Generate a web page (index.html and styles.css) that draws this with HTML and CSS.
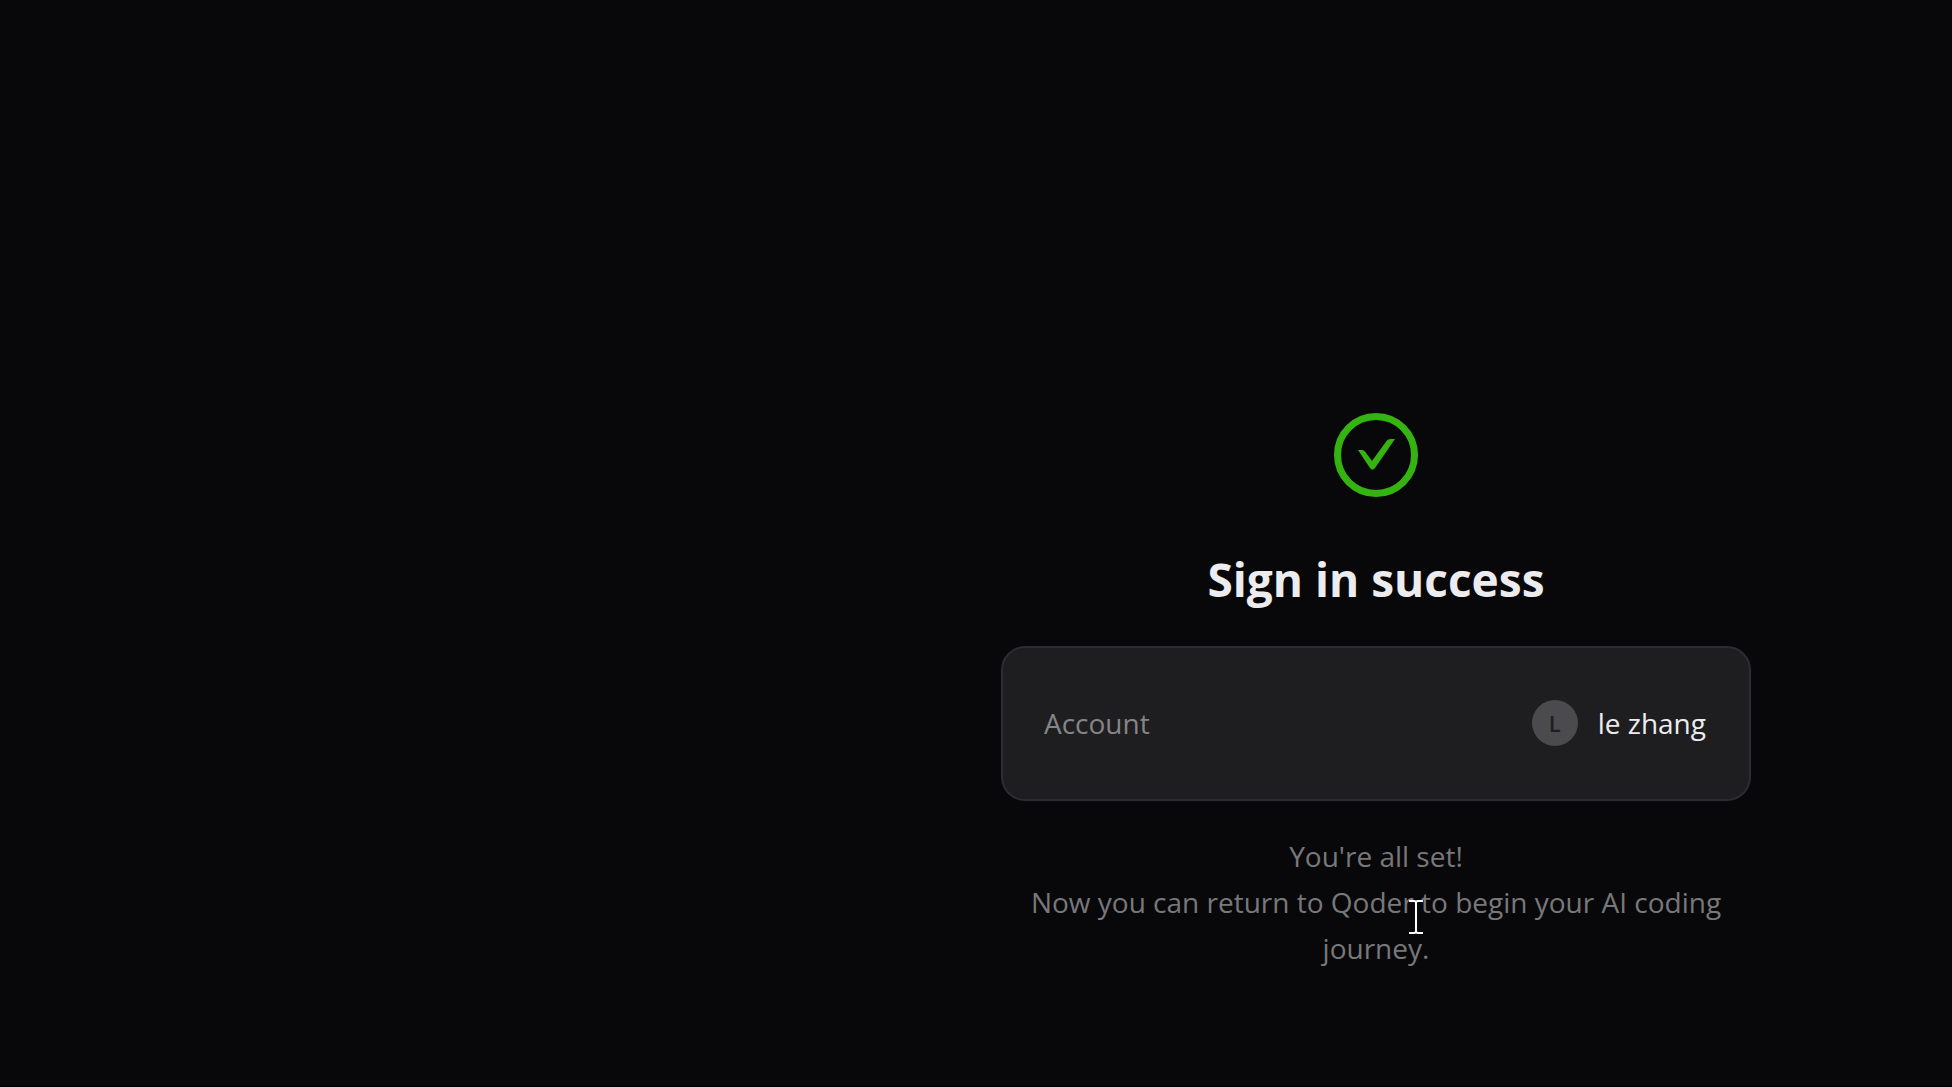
FILE: index.html
```html
<!DOCTYPE html>
<html lang="en">
<head>
<meta charset="utf-8">
<title>Sign in success</title>
<link rel="stylesheet" href="styles.css">
</head>
<body>
<main class="page">
  <section class="result">
    <svg class="status-icon" viewBox="0 0 84 84" aria-hidden="true">
      <circle cx="42" cy="42" r="38.500" fill="none" stroke="#34b311" stroke-width="7"/>
      <path d="M24 37h4q2 0 3 1.500l7 9.500 14.500-20q1.500-2 4-2h4.500L41 55q-2.500 3-5 0Z" fill="#34b311"/>
    </svg>
    <h1 class="title">Sign in success</h1>
    <dl class="card">
      <dt class="label">Account</dt>
      <dd class="account"><span class="avatar">L</span><span>le zhang</span></dd>
    </dl>
    <div class="message">
      <p>You're all set!</p>
      <p>Now you can return to Qoder to begin your AI coding journey.</p>
      <svg class="cursor" viewBox="0 0 16 36" aria-hidden="true">
        <path d="M1 2h5q2 0 2 2v28q0 2-2 2H1M15 2h-5q-2 0-2 2v28q0 2 2 2h5" fill="none" stroke="#fff" stroke-width="2"/>
      </svg>
    </div>
  </section>
</main>
</body>
</html>
```
FILE: styles.css
```css
* {
  box-sizing: border-box;
}

body {
  margin: 0;
  background: #08080a;
  color: #ececef;
  font: 28px/46px "Open Sans", "Noto Sans", sans-serif;
}

.page {
  display: flex;
  justify-content: center;
  min-height: 100vh;
  padding: 413px 0 40px 800px;
  border-bottom: 1px solid #000;
}

.result {
  display: flex;
  flex-direction: column;
  align-items: center;
  width: 100%;
  max-width: 750px;
}

.status-icon {
  width: 84px;
  height: 84px;
}

.title {
  margin: 48px 0 32px;
  font-size: 46px;
  font-weight: 700;
  line-height: 69px;
}

.card {
  display: flex;
  align-items: center;
  justify-content: space-between;
  width: 100%;
  margin: 0;
  padding: 52px 43px 53px 41px;
  border: 2px solid #2b2d31;
  border-radius: 24px;
  background: #1e1e20;
}

.label {
  color: #858588;
}

.account {
  display: flex;
  align-items: center;
  gap: 20px;
  margin: 0;
}

.avatar {
  width: 46px;
  height: 46px;
  border-radius: 50%;
  background: #4b4b4d;
  color: #1e1e20;
  font-size: 22px;
  font-weight: 600;
  text-align: center;
}

.message {
  position: relative;
  width: 100%;
  padding: 32px 20px 0;
  color: #78787b;
  text-align: center;
}

.message p {
  margin: 0;
}

.cursor {
  position: absolute;
  top: 98px;
  left: 407px;
  width: 16px;
  height: 36px;
}
```
